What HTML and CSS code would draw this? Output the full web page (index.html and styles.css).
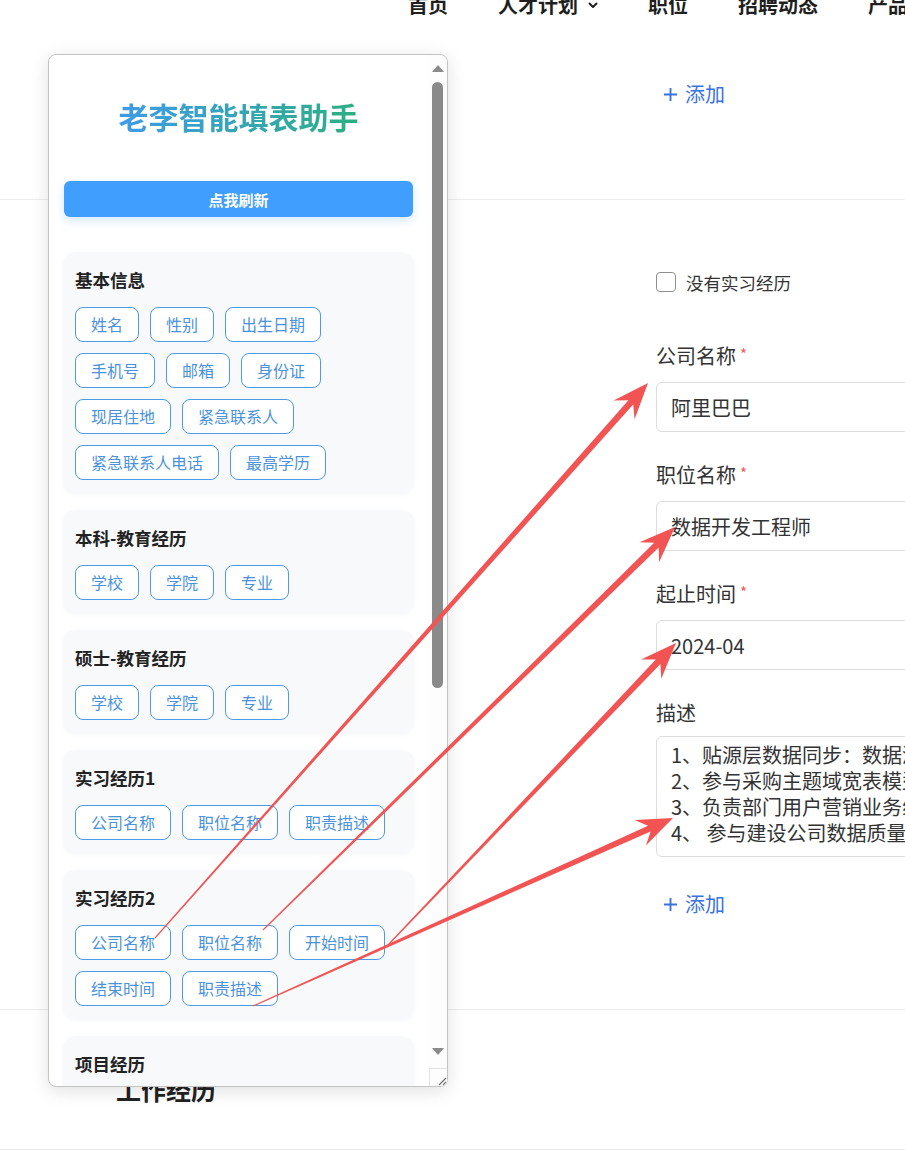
FILE: index.html
```html
<!doctype html>
<html lang="zh-CN">

<head>
    <meta charset="UTF-8" />
    <meta name="viewport" content="width=device-width, initial-scale=1.0" />
    <link rel="stylesheet" href="styles.css">
</head>

<body>
    <header class="topnav">
        <span class="topnav__item">首页</span>
        <span class="topnav__item">人才计划
            <svg class="topnav__caret" viewBox="0 0 10 6"><polyline points="1,1 5,5 9,1" /></svg>
        </span>
        <span class="topnav__item">职位</span>
        <span class="topnav__item">招聘动态</span>
        <span class="topnav__item">产品服务</span>
    </header>

    <section class="block block--tail">
        <div class="form-col">
            <button class="add-btn">
                <svg class="add-btn__icon" viewBox="0 0 16 16"><path d="M8 1v14M1 8h14" /></svg>
                添加
            </button>
        </div>
    </section>

    <section class="block block--intern">
        <div class="form-col">
            <label class="check">
                <span class="check__box"></span>
                没有实习经历
            </label>

            <div class="fields">
                <div class="field">
                    <div class="field__label">公司名称<span class="field__req">*</span></div>
                    <input class="field__input" value="阿里巴巴" />
                </div>
                <div class="field">
                    <div class="field__label">职位名称<span class="field__req">*</span></div>
                    <input class="field__input" value="数据开发工程师" />
                </div>
                <div class="field">
                    <div class="field__label">起止时间<span class="field__req">*</span></div>
                    <input class="field__input" value="2024-04" />
                </div>
                <div class="field">
                    <div class="field__label field__label--tight">描述</div>
                    <textarea class="field__textarea" wrap="off">1、贴源层数据同步：数据源对接与ETL开发
2、参与采购主题域宽表模型设计与开发
3、负责部门用户营销业务线数据需求开发
4、 参与建设公司数据质量监控体系</textarea>
                </div>
            </div>

            <button class="add-btn add-btn--bottom">
                <svg class="add-btn__icon" viewBox="0 0 16 16"><path d="M8 1v14M1 8h14" /></svg>
                添加
            </button>
        </div>
    </section>

    <section class="block block--work">
        <h2 class="block__title">工作经历</h2>
    </section>

    <aside class="helper">
        <div class="helper__body">
            <h1 class="helper__title"><span>老李智能填表助手</span></h1>
            <button class="helper__refresh">点我刷新</button>

            <div class="groups">
                <div class="group">
                    <h3 class="group__title">基本信息</h3>
                    <div class="group__tags">
                        <span class="tag">姓名</span>
                        <span class="tag">性别</span>
                        <span class="tag">出生日期</span>
                        <span class="tag">手机号</span>
                        <span class="tag">邮箱</span>
                        <span class="tag">身份证</span>
                        <span class="tag">现居住地</span>
                        <span class="tag">紧急联系人</span>
                        <span class="tag">紧急联系人电话</span>
                        <span class="tag">最高学历</span>
                    </div>
                </div>
                <div class="group">
                    <h3 class="group__title">本科-教育经历</h3>
                    <div class="group__tags">
                        <span class="tag">学校</span>
                        <span class="tag">学院</span>
                        <span class="tag">专业</span>
                    </div>
                </div>
                <div class="group">
                    <h3 class="group__title">硕士-教育经历</h3>
                    <div class="group__tags">
                        <span class="tag">学校</span>
                        <span class="tag">学院</span>
                        <span class="tag">专业</span>
                    </div>
                </div>
                <div class="group">
                    <h3 class="group__title">实习经历1</h3>
                    <div class="group__tags">
                        <span class="tag">公司名称</span>
                        <span class="tag">职位名称</span>
                        <span class="tag">职责描述</span>
                    </div>
                </div>
                <div class="group">
                    <h3 class="group__title">实习经历2</h3>
                    <div class="group__tags">
                        <span class="tag">公司名称</span>
                        <span class="tag">职位名称</span>
                        <span class="tag">开始时间</span>
                        <span class="tag">结束时间</span>
                        <span class="tag">职责描述</span>
                    </div>
                </div>
                <div class="group">
                    <h3 class="group__title">项目经历</h3>
                    <div class="group__tags">
                        <span class="tag">项目名称</span>
                        <span class="tag">项目角色</span>
                        <span class="tag">项目描述</span>
                    </div>
                </div>
            </div>
        </div>

        <div class="helper__scrollbar">
            <div class="sb-btn"><span class="sb-btn__up"></span></div>
            <div class="sb-track"><div class="sb-thumb"></div></div>
            <div class="sb-btn"><span class="sb-btn__down"></span></div>
            <div class="sb-corner">
                <svg viewBox="0 0 12 12"><path d="M11 4L4 11M11 8L8 11" /></svg>
            </div>
        </div>
    </aside>

    <svg class="arrows" viewBox="0 0 905 1170"></svg>

    <script>
        (() => {
            // start x, start y, tip x, tip y
            const ARROWS = [
                [155, 938, 648, 383],
                [263, 930, 675, 527],
                [388, 945, 676, 643],
                [253, 1006, 673, 818],
            ];
            const HEAD_LEN = 36;
            const HEAD_HALF = 14;
            const $svg = document.querySelector('.arrows');

            function arrowPoints([x1, y1, x2, y2]) {
                const len = Math.hypot(x2 - x1, y2 - y1);
                const ux = (x2 - x1) / len;
                const uy = (y2 - y1) / len;
                const pt = (along, side) =>
                    (x1 + ux * along - uy * side).toFixed(1) + ',' +
                    (y1 + uy * along + ux * side).toFixed(1);
                const neck = len - HEAD_LEN * 0.72;
                const base = len - HEAD_LEN;
                return [
                    pt(0, 0.6), pt(neck, 3.2), pt(base, HEAD_HALF), pt(len, 0),
                    pt(base, -HEAD_HALF), pt(neck, -3.2), pt(0, -0.6),
                ].join(' ');
            }

            ARROWS.forEach((a) => {
                const $poly = document.createElementNS('http://www.w3.org/2000/svg', 'polygon');
                $poly.setAttribute('points', arrowPoints(a));
                $svg.appendChild($poly);
            });
        })();
    </script>
</body>

</html>
```

FILE: styles.css
```css
* {
    margin: 0;
    padding: 0;
    box-sizing: border-box;
}

html,
body {
    overflow: hidden;
}

body {
    position: relative;
    height: 1170px;
    background-color: #fff;
    color: #333;
    font-family: "Noto Sans CJK SC", sans-serif;
}

button,
input,
textarea {
    font-family: inherit;
}

/* top navigation (scrolled mostly out of view) */
.topnav {
    display: flex;
    align-items: center;
    gap: 50px;
    height: 22px;
    margin-top: -6px;
    padding-left: 408px;
    font-size: 20px;
    font-weight: bold;
    line-height: 22px;
    color: #1f1f1f;
    white-space: nowrap;
}

.topnav__item {
    display: flex;
    align-items: center;
}

.topnav__caret {
    width: 10px;
    height: 6px;
    margin-left: 10px;
    fill: none;
    stroke: #1f1f1f;
    stroke-width: 2;
}

/* page blocks */
.block {
    border-bottom: 1px solid #ececec;
    padding-bottom: 92px;
}

.block--tail {
    padding-top: 65px;
}

.block--intern {
    padding-top: 69px;
}

.block--work {
    padding: 62px 0 43px 116px;
}

.block__title {
    font-size: 25px;
    font-weight: bold;
    line-height: 34px;
    color: #222;
}

.form-col {
    margin-left: 656px;
}

.add-btn {
    display: inline-flex;
    align-items: center;
    gap: 7px;
    height: 26px;
    margin-left: 7px;
    border: none;
    background: none;
    color: #3a72e0;
    font-size: 20px;
    line-height: 26px;
}

.add-btn--bottom {
    margin-top: 34px;
}

.add-btn__icon {
    width: 15px;
    height: 15px;
    fill: none;
    stroke: #3a72e0;
    stroke-width: 2;
}

.check {
    display: flex;
    align-items: center;
    gap: 10px;
    height: 26px;
    font-size: 17.5px;
    color: #333;
}

.check__box {
    width: 20px;
    height: 20px;
    border: 1px solid #8f8f8f;
    border-radius: 4px;
}

.fields {
    margin-top: 48px;
}

.field {
    margin-bottom: 30px;
}

.field:last-child {
    margin-bottom: 0;
}

.field__label {
    height: 26px;
    margin-bottom: 13px;
    font-size: 20px;
    line-height: 26px;
    color: #333;
}

.field__label--tight {
    margin-bottom: 10px;
}

.field__req {
    position: relative;
    top: -4px;
    margin-left: 4px;
    font-size: 15px;
    line-height: 0;
    color: #f25b5b;
}

.field__input,
.field__textarea {
    display: block;
    width: 320px;
    border: 1px solid #dcdcdc;
    border-radius: 6px;
    background: #fff;
    color: #333;
    font-size: 20px;
    outline: none;
}

.field__input {
    height: 50px;
    padding: 0 14px;
}

.field__textarea {
    height: 121px;
    padding: 5px 14px;
    line-height: 26px;
    white-space: pre;
    overflow: hidden;
    resize: none;
}

/* floating helper panel */
.helper {
    position: absolute;
    top: 54px;
    left: 48px;
    z-index: 5;
    display: flex;
    width: 400px;
    height: 1033px;
    background-color: #fff;
    border: 1px solid #c4c4c4;
    border-radius: 8px;
    box-shadow: 0 4px 18px rgba(0, 0, 0, 0.12);
    overflow: hidden;
}

.helper__body {
    flex: 1;
    padding: 41px 15px 0 14px;
    overflow: hidden;
}

.helper__title {
    text-align: center;
    font-size: 30px;
    font-weight: bold;
    line-height: 40px;
}

.helper__title span {
    background: linear-gradient(90deg, #3f9be8, #2caf82);
    -webkit-background-clip: text;
    background-clip: text;
    color: transparent;
}

.helper__refresh {
    display: block;
    width: 349px;
    height: 36px;
    margin: 45px 1px 0;
    border: none;
    border-radius: 6px;
    background-color: #409eff;
    box-shadow: 0 4px 10px rgba(64, 158, 255, 0.22);
    color: #fff;
    font-size: 15px;
    font-weight: bold;
}

.groups {
    display: flex;
    flex-direction: column;
    gap: 16px;
    margin-top: 35px;
}

.group {
    padding: 16px 12px 14px;
    background-color: #f7f9fb;
    border-radius: 12px;
    box-shadow: 0 1px 4px rgba(0, 0, 0, 0.03);
}

.group__title {
    margin-bottom: 15px;
    font-size: 17.5px;
    font-weight: bold;
    line-height: 24px;
    color: #222;
}

.group__tags {
    display: flex;
    flex-wrap: wrap;
    gap: 11px;
}

.tag {
    height: 35px;
    padding: 0 15px;
    border: 1px solid #4d9be6;
    border-radius: 8px;
    background-color: #fff;
    color: #4a92dc;
    font-size: 16px;
    line-height: 33px;
    white-space: nowrap;
}

/* scrollbar drawn like the classic windows one */
.helper__scrollbar {
    display: flex;
    flex-direction: column;
    width: 18px;
    background-color: #fdfdfd;
}

.sb-btn {
    display: flex;
    align-items: center;
    justify-content: center;
    height: 26px;
    padding-right: 1px;
}

.sb-btn__up,
.sb-btn__down {
    width: 0;
    height: 0;
    border-left: 6.5px solid transparent;
    border-right: 6.5px solid transparent;
}

.sb-btn__up {
    border-bottom: 7px solid #8a8a8a;
}

.sb-btn__down {
    border-top: 7px solid #8a8a8a;
}

.sb-track {
    flex: 1;
}

.sb-thumb {
    width: 11px;
    height: 606px;
    margin: 1px 4px 0 3px;
    border-radius: 6px;
    background-color: #8a8a8a;
}

.sb-corner {
    display: flex;
    align-items: flex-end;
    justify-content: flex-end;
    height: 18px;
    margin-top: 4px;
    border-top: 1px solid #e2e2e2;
    border-left: 1px solid #e2e2e2;
}

.sb-corner svg {
    width: 12px;
    height: 12px;
    fill: none;
    stroke: #6f6f6f;
    stroke-width: 1.2;
}

/* red annotation arrows */
.arrows {
    position: absolute;
    top: 0;
    left: 0;
    z-index: 10;
    width: 905px;
    height: 1170px;
    pointer-events: none;
    fill: #f25454;
}
```
